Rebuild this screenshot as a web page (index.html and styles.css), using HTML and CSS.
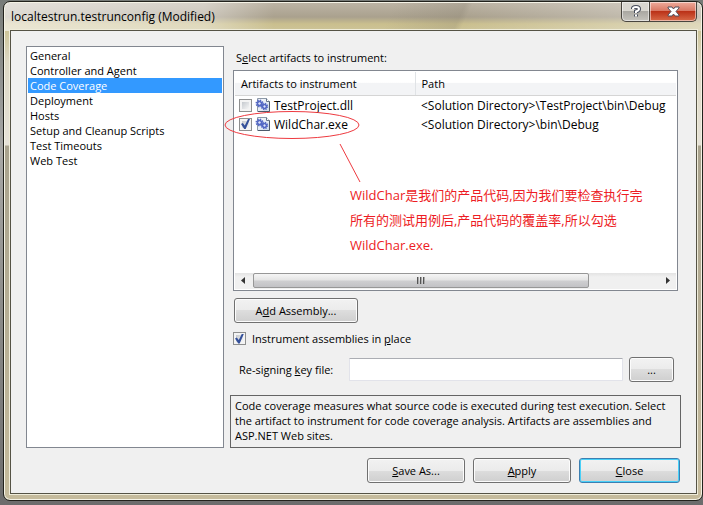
FILE: index.html
```
<!DOCTYPE html>
<html lang="en">
<head>
<meta charset="utf-8">
<title>localtestrun.testrunconfig (Modified)</title>
<link rel="stylesheet" href="styles.css">
</head>
<body>
<svg width="0" height="0" class="defs" aria-hidden="true">
  <defs>
    <linearGradient id="page" x1="0" y1="0" x2="1" y2="1"><stop offset="0" stop-color="#fff"/><stop offset="1" stop-color="#cbd9ea"/></linearGradient>
    <symbol id="assembly" viewBox="0 0 16 16">
      <path d="M2.500 1.500H11.500L14.500 4.500V14.500H2.500Z" fill="url(#page)" stroke="#8d99a8"/>
      <path d="M14.500 4.500V14.500H3" fill="none" stroke="#4d5a6b"/>
      <path d="M11.500 1.500V4.500h3" fill="#fff" stroke="#66758a"/>
      <g fill="none" stroke="#5468c4">
        <circle cx="4.500" cy="6.500" r="2" stroke-width="1.800"/>
        <circle cx="4.500" cy="6.500" r="3.300" stroke-width="1.400" stroke-dasharray="1.400 1.190"/>
        <circle cx="9.500" cy="9.500" r="1.800" stroke-width="1.800"/>
        <circle cx="9.500" cy="9.500" r="3" stroke-width="1.400" stroke-dasharray="1.300 1.060"/>
      </g>
      <circle cx="4.500" cy="6.500" r="1" fill="#dbe3ff"/><circle cx="9.500" cy="9.500" r="1" fill="#dbe3ff"/>
    </symbol>
  </defs>
</svg>
<main class="dialog">
  <header class="titlebar">
    <h1>localtestrun.testrunconfig (Modified)</h1>
    <div class="caption">
      <button type="button" class="help" aria-label="Help">
        <svg width="10" height="13" viewBox="0 0 10 13"><path d="M2 4V3.500Q2 2 5 2T8 4Q8 5.500 5 6.500V8M5 9.500v2" fill="none" stroke="#454b59" stroke-width="4"/><path d="M2 4V3.500Q2 2 5 2T8 4Q8 5.500 5 6.500V8M5 9.500v2" fill="none" stroke="#fff" stroke-width="2"/></svg>
      </button>
      <button type="button" class="exit" aria-label="Close window">
        <svg width="13" height="11" viewBox="0 0 13 11"><path d="M1 1h4l1.500 2L8 1h4v1L9 5.500 12 9v1H8L6.500 8 5 10H1V9l3-3.500L1 2Z" fill="#fff" stroke="#534e5a"/></svg>
      </button>
    </div>
  </header>
  <div class="client">
    <div class="columns">
      <nav class="pages" aria-label="Settings pages">
        <a href="#">General</a>
        <a href="#">Controller and Agent</a>
        <a href="#" class="current" aria-current="page">Code Coverage</a>
        <a href="#">Deployment</a>
        <a href="#">Hosts</a>
        <a href="#">Setup and Cleanup Scripts</a>
        <a href="#">Test Timeouts</a>
        <a href="#">Web Test</a>
      </nav>
      <section class="settings">
        <h2>S<u>e</u>lect artifacts to instrument:</h2>
        <div class="listview">
          <table>
            <thead><tr><th class="name">Artifacts to instrument</th><th>Path</th></tr></thead>
            <tbody>
              <tr>
                <td><label><input type="checkbox"><svg width="16" height="16"><use href="#assembly"/></svg>TestProject.dll</label></td>
                <td>&lt;Solution Directory&gt;\TestProject\bin\Debug</td>
              </tr>
              <tr>
                <td><label><input type="checkbox" checked><svg width="16" height="16"><use href="#assembly"/></svg>WildChar.exe</label></td>
                <td>&lt;Solution Directory&gt;\bin\Debug</td>
              </tr>
            </tbody>
          </table>
          <div class="scrollbar">
            <svg width="18" height="15" viewBox="0 0 18 15"><path d="M10 4v7L6 7.500Z" fill="#333"/></svg>
            <div class="track"><div class="thumb"><i></i><i></i><i></i></div></div>
            <svg width="18" height="15" viewBox="0 0 18 15"><path d="M8 4v7l4-3.500Z" fill="#333"/></svg>
          </div>
          <svg class="marks" width="160" height="80" viewBox="0 0 160 80" fill="none" stroke="#ee3a40"><ellipse cx="68" cy="15" rx="67" ry="13.500"/><path d="M116 34 136 72"/></svg>
          <p class="note" lang="zh">WildChar是我们的产品代码,因为我们要检查执行完<br>所有的测试用例后,产品代码的覆盖率,所以勾选<br>WildChar.exe.</p>
        </div>
        <button type="button" class="btn add">A<u>d</u>d Assembly...</button>
        <label class="inplace"><input type="checkbox" checked><span>Instrument assemblies in <u>p</u>lace</span></label>
        <div class="keyrow">
          <label for="key">Re-signing <u>k</u>ey file:</label>
          <input type="text" id="key">
          <button type="button" class="btn browse" aria-label="Browse">...</button>
        </div>
        <p class="about">Code coverage measures what source code is executed during test execution. Select the artifact to instrument for code coverage analysis. Artifacts are assemblies and ASP.NET Web sites.</p>
      </section>
    </div>
    <footer>
      <button type="button" class="btn"><u>S</u>ave As...</button>
      <button type="button" class="btn"><u>A</u>pply</button>
      <button type="button" class="btn default"><u>C</u>lose</button>
    </footer>
  </div>
</main>
</body>
</html>
```
FILE: styles.css
```
* { box-sizing: border-box; }
body {
  margin: 0;
  min-height: 100vh;
  display: flex;
  padding: 1px 0 4px 3px;
  background: linear-gradient(#777b78, #a8a8a6 30%, #8c8c8a 60%, #6c6c6c);
  font: 11px/15px "Open Sans", "Noto Sans CJK SC", sans-serif;
  color: #000;
}
button, input { font: inherit; color: inherit; }
h1, h2, p { margin: 0; font-size: 11px; font-weight: 400; }
h1, table { font-size: 12px; }
.defs { position: absolute; }
.dialog {
  flex: 1;
  min-width: 0;
  display: flex;
  flex-direction: column;
  padding: 0 5px 6px 6px;
  border: 1px solid #22221c;
  border-radius: 7px;
  box-shadow: inset 0 0 0 1px #f5f3e6;
  background:
    linear-gradient(90deg, #fff9 0, #fff6 200px, #fff0 270px) 0 0 / 100% 29px no-repeat,
    linear-gradient(115deg, #fff0 55%, #77706033 65%, #fff0 66%, #fff6) 0 0 / 100% 29px no-repeat,
    linear-gradient(#bdb5a6 0, #aaa18e 15px, #cabf8e 22px, #cdc499 29px, #ddd8c4 60px, #e6e2d8 143px, #a9a38e 144px, #c5bb9c 100%);
}
.titlebar { display: flex; justify-content: space-between; height: 28px; }
h1 { padding: 7px 0 0 1px; }
.caption { display: flex; height: 20px; }
.caption button {
  display: grid;
  place-items: center;
  padding: 0;
  border: 1px solid #49463f;
  border-top: 0;
  box-shadow: inset 0 0 0 1px #ffffff80;
}
.help { width: 29px; border-radius: 0 0 0 5px; background: linear-gradient(#d9d7d0 45%, #aaa8a2 50%, #c5c3bc); }
.exit { width: 48px; margin-left: -1px; border-radius: 0 0 5px 0; background: linear-gradient(#efab9b, #d97965 45%, #bb3218 50%, #d86a48); }
.client {
  flex: 1;
  display: flex;
  flex-direction: column;
  padding: 15px;
  padding-bottom: 9px;
  border: 1px solid #555345;
  outline: 1px solid #efecd9;
  background: #f0f0f0;
}
.columns { display: grid; grid-template-columns: 198px minmax(0, 1fr); gap: 6px; }
.pages { display: flex; flex-direction: column; padding: 1px; border: 1px solid #828790; background: #fff; }
.pages a { padding-left: 2px; color: #000; text-decoration: none; }
.pages .current { background: #3399ff; color: #fff; }
.settings { display: flex; flex-direction: column; }
h2 { padding: 4px 0 5px 6px; }
.listview {
  position: relative;
  display: flex;
  flex-direction: column;
  justify-content: space-between;
  height: 221px;
  margin: 0 3px;
  padding: 1px;
  border: 1px solid #828790;
  background: #fff;
}
table { width: 100%; border-collapse: collapse; table-layout: fixed; }
th, td { padding: 0 0 0 6px; height: 19px; text-align: left; font-weight: 400; white-space: nowrap; }
th { height: 23px; border-bottom: 1px solid #d5d5d5; background: linear-gradient(#fff 45%, #f3f4f6 50%); font-size: 11px; }
.name { width: 180px; border-right: 1px solid #e0e3e6; }
td:first-child { padding-left: 4px; }
td label { display: flex; align-items: center; gap: 3px; height: 19px; }
input[type="checkbox"] {
  appearance: none;
  width: 13px;
  height: 13px;
  margin: 0;
  border: 1px solid #8e8f8f;
  background: linear-gradient(135deg, #c5c9ce, #f6f6f6) 50% / 7px 7px no-repeat #f4f4f4;
  display: grid;
  place-items: center;
}
input[type="checkbox"]:checked::before {
  content: "";
  width: 9px;
  height: 10px;
  background: #34509a;
  clip-path: polygon(0 50%, 20% 40%, 42% 66%, 78% 0, 100% 0, 52% 100%, 36% 100%);
}
.scrollbar { display: flex; height: 16px; padding-bottom: 1px; background: linear-gradient(#e3e3e3, #f0f0f0 4px); }
.track { flex: 1; }
.thumb {
  display: flex;
  justify-content: center;
  align-items: center;
  gap: 1px;
  width: 83%;
  height: 15px;
  border: 1px solid #979797;
  border-radius: 2px;
  background: linear-gradient(#f5f5f5, #e4e4e4 48%, #cfcfd1 52%, #c2c2c5);
}
.thumb i { width: 2px; height: 7px; background: linear-gradient(90deg, #555 50%, #aaa 50%); }
.marks { position: absolute; left: -10px; top: 39px; }
.note { position: absolute; left: 116px; top: 112px; font-size: 13px; line-height: 25px; color: #ed1c24; white-space: nowrap; }
.btn {
  height: 25px;
  padding: 0;
  border: 1px solid #707070;
  border-radius: 3px;
  box-shadow: inset 0 0 0 1px #fcfcfc;
  background: linear-gradient(#f2f2f2, #ebebeb 50%, #dddddd 50%, #cfcfcf);
}
.add { width: 124px; margin: 7px 0 0 4px; }
.inplace { display: flex; align-items: center; gap: 6px; margin: 8px 0 0 3px; }
.keyrow { display: flex; align-items: center; gap: 6px; margin: 11px 7px 0 9px; }
.keyrow label { width: 104px; white-space: nowrap; }
.keyrow input { flex: 1; min-width: 0; height: 23px; border: 1px solid #e2e3ea; border-top-color: #abadb3; border-radius: 1px; background: #fff; }
.browse { width: 45px; }
.about { margin-top: 13px; padding: 2px 4px 4px; border: 1px solid #646464; }
footer { display: flex; justify-content: flex-end; gap: 8px; margin-top: 10px; padding-right: 1px; }
footer .btn { width: 98px; }
footer .default { width: 101px; border-color: #3c7fb1; box-shadow: inset 0 0 0 1px #48d0f8; }
```
